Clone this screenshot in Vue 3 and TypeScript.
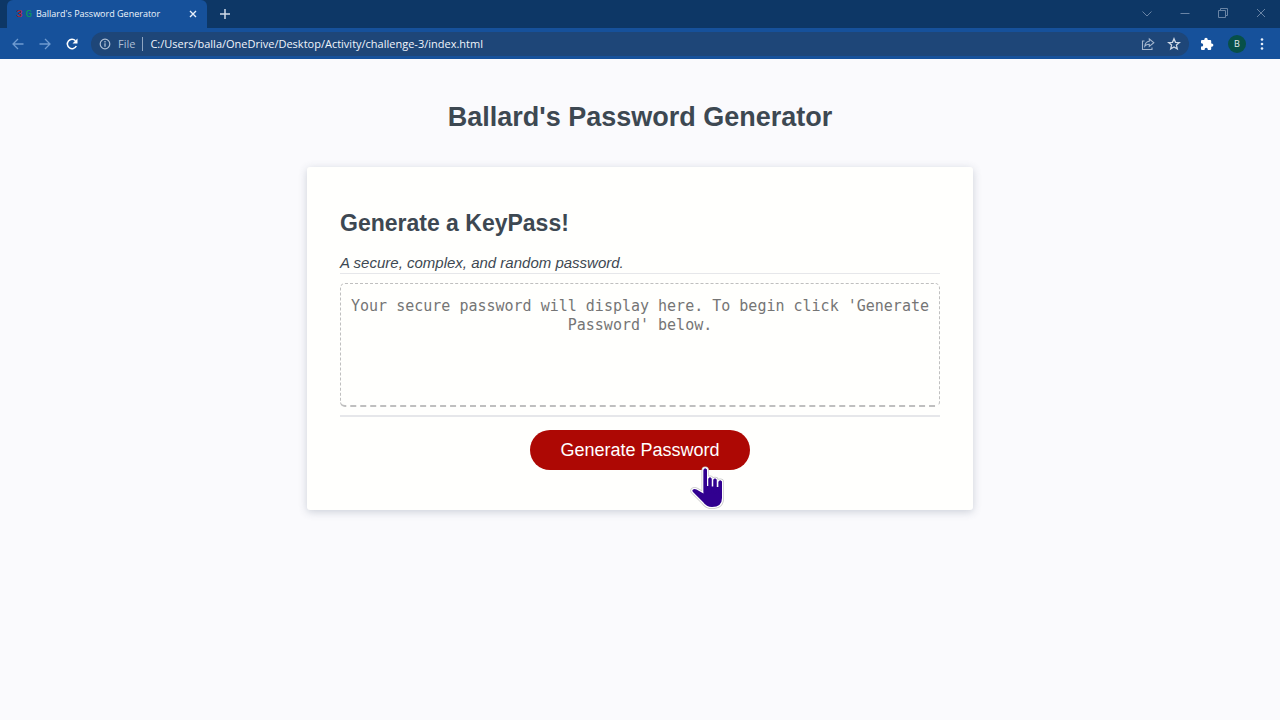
<script setup lang="ts">
import { ref } from 'vue'

const address = ref<string>('C:/Users/balla/OneDrive/Desktop/Activity/challenge-3/index.html')
const password = ref<string>('')

const sets: string[] = ['abcdefghijklmnopqrstuvwxyz', 'ABCDEFGHIJKLMNOPQRSTUVWXYZ', '0123456789', '!@#$%^&*()-_=+']

function generate(): void {
  const pool = sets.join('')
  const values = crypto.getRandomValues(new Uint32Array(16))
  password.value = Array.from(values, (v) => pool[v % pool.length]).join('')
}
</script>

<template>
  <div class="window">
    <header class="chrome">
      <div class="tabs">
        <div class="tab">
          <span class="favicon" aria-hidden="true"><span class="fav-red">3</span><span class="fav-green">G</span></span>
          <span class="tab-title">Ballard's Password Generator</span>
          <button class="icon tab-close" type="button" aria-label="Close tab">
            <svg width="8" height="8" viewBox="0 0 8 8"><path d="M1 1l6 6M7 1l-6 6" stroke="#e8f0fb" stroke-width="1.4" /></svg>
          </button>
        </div>
        <button class="icon new-tab" type="button" aria-label="New tab">
          <svg width="12" height="12" viewBox="0 0 12 12"><path d="M6 1v10M1 6h10" stroke="#cfdae8" stroke-width="1.5" /></svg>
        </button>
        <div class="controls">
          <button class="icon" type="button" aria-label="Search tabs">
            <svg width="12" height="12" viewBox="0 0 12 12"><path d="M1.500 3.500l4.500 4.500 4.500-4.500" /></svg>
          </button>
          <button class="icon" type="button" aria-label="Minimize">
            <svg width="12" height="12" viewBox="0 0 12 12"><path d="M1.500 5.500h9" /></svg>
          </button>
          <button class="icon" type="button" aria-label="Restore">
            <svg width="12" height="12" viewBox="0 0 12 12"><path d="M1.500 2.500h7v7h-7zM3.500 2.500v-2h7v7h-2" /></svg>
          </button>
          <button class="icon" type="button" aria-label="Close window">
            <svg width="12" height="12" viewBox="0 0 12 12"><path d="M2 1l8 8M10 1l-8 8" /></svg>
          </button>
        </div>
      </div>

      <div class="toolbar">
        <nav class="nav">
          <button class="icon" type="button" aria-label="Back">
            <svg width="14" height="12" viewBox="0 0 14 12" fill="none" stroke="#6f9bd1" stroke-width="1.3"><path d="M12.500 6H2M7 1L2 6l5 5" /></svg>
          </button>
          <button class="icon" type="button" aria-label="Forward">
            <svg width="14" height="12" viewBox="0 0 14 12" fill="none" stroke="#6f9bd1" stroke-width="1.3"><path d="M1.500 6h10.500M7 1l5 5-5 5" /></svg>
          </button>
          <button class="icon" type="button" aria-label="Reload">
            <svg width="14" height="14" viewBox="0 0 14 14"><path d="M11.300 9A4.700 4.700 0 1 1 10.500 3.800" fill="none" stroke="#fff" stroke-width="1.5" /><path d="M12.500 1.500v5h-5z" fill="#fff" /></svg>
          </button>
        </nav>
        <div class="omnibox">
          <svg width="12" height="12" viewBox="0 0 12 12"><circle cx="6" cy="6" r="4.8" fill="none" stroke="#aebfd5" stroke-width="1.2" /><path d="M6 5.200v3.600M6 3.100v1.300" stroke="#aebfd5" stroke-width="1.3" /></svg>
          <label class="scheme" for="address">File</label>
          <span class="divider"></span>
          <input id="address" v-model="address" class="address" type="text" spellcheck="false" />
          <button class="icon" type="button" aria-label="Share">
            <svg width="14" height="14" viewBox="0 0 14 14" fill="none" stroke="#a4b6ce" stroke-width="1.1"><path d="M3.500 4H1.500v8.500h9.500V10.500" /><path d="M8.300 2l4.500 3.700-4.500 3.700V7.200C6.300 7.100 5 7.700 3.800 9.200 4.100 6.200 5.700 4.500 8.300 4.200z" /></svg>
          </button>
          <button class="icon" type="button" aria-label="Bookmark">
            <svg width="14" height="14" viewBox="0 0 14 14" fill="none" stroke="#ccd7e5" stroke-width="1.3"><path d="M7 1.700l1.500 3.600 3.900.300-3 2.500.9 3.800L7 9.900l-3.300 2 .9-3.800-3-2.500 3.900-.300z" /></svg>
          </button>
        </div>
        <div class="actions">
          <button class="icon" type="button" aria-label="Extensions">
            <svg width="14" height="14" viewBox="0 0 14 14"><path d="M4.300 3V2.500a1.700 1.700 0 0 1 3.400 0V3h2.500q1 0 1 1v2.400h.5a1.700 1.700 0 0 1 0 3.400h-.5V12q0 1-1 1H7.800v-.600a1.600 1.600 0 0 0-3.200 0V13H2q-1 0-1-1V9.500h.6a1.600 1.600 0 0 0 0-3.200H1V4q0-1 1-1z" fill="#fff" /></svg>
          </button>
          <button class="avatar" type="button" aria-label="Profile B">B</button>
          <button class="icon" type="button" aria-label="Menu">
            <svg width="4" height="14" viewBox="0 0 4 14" fill="#e8f0fb"><circle cx="2" cy="2.500" r="1.3" /><circle cx="2" cy="7" r="1.3" /><circle cx="2" cy="11.500" r="1.3" /></svg>
          </button>
        </div>
      </div>
    </header>

    <main class="page">
      <h1>Ballard's Password Generator</h1>
      <section class="card">
        <h2>Generate a KeyPass!</h2>
        <label class="lead" for="password">A secure, complex, and random password.</label>
        <textarea
          id="password"
          v-model="password"
          readonly
          placeholder="Your secure password will display here. To begin click 'Generate Password' below."
        ></textarea>
        <div class="footer">
          <div class="action">
            <button class="generate" type="button" @click="generate">Generate Password</button>
            <svg class="pointer" width="36" height="44" viewBox="0 0 36 44" aria-hidden="true">
              <path
                d="M12.500 4.500Q12.500 2.500 14.200 2.500T16 4.500V20H17.500V13Q17.500 11.500 19 11.500T20.500 13V20.500H22.500V14Q22.500 12.700 24 12.700T25.500 14V21H27.500V16Q27.500 14.500 29.200 14.500T31 16V32Q31 41 21 41Q15.500 41 12 36L2 26Q.500 24.500 2 23.500T5.500 23.500L12.500 27.500Z"
                fill="#310090" stroke="#c9c9c9" stroke-width="4" stroke-linejoin="round"
              />
              <path
                d="M12.500 4.500Q12.500 2.500 14.200 2.500T16 4.500V20H17.500V13Q17.500 11.500 19 11.500T20.500 13V20.500H22.500V14Q22.500 12.700 24 12.700T25.500 14V21H27.500V16Q27.500 14.500 29.200 14.500T31 16V32Q31 41 21 41Q15.500 41 12 36L2 26Q.500 24.500 2 23.500T5.500 23.500L12.500 27.500Z"
                fill="#310090" stroke="#fff" stroke-width="2.5" stroke-linejoin="round" paint-order="stroke"
              />
              <path d="M14.200 4V26M19 13V26M24 14V26M29.200 16V26" stroke="#310090" stroke-width="3" stroke-linecap="round" />
            </svg>
          </div>
        </div>
      </section>
    </main>
  </div>
</template>

<style>
body {
  margin: 0;
  background: #fafafd;
}
</style>

<style scoped>
* {
  box-sizing: border-box;
}
.window {
  min-height: 100vh;
  font-family: 'Liberation Sans', Arial, sans-serif;
  color: #3d4852;
}
.chrome {
  font-family: 'Open Sans', 'Noto Sans', sans-serif;
  background: #0d3766;
}
svg {
  display: block;
  flex: none;
}
.icon {
  display: flex;
  align-items: center;
  justify-content: center;
  padding: 0;
  border: 0;
  background: none;
}
.tabs {
  display: flex;
  align-items: center;
  height: 28px;
  padding: 0 13px 0 7px;
}
.tab {
  display: flex;
  align-items: center;
  width: 200px;
  height: 28px;
  padding: 0 10px 0 9px;
  border-radius: 6px 6px 0 0;
  background: #16519b;
}
.favicon {
  display: flex;
  flex: none;
  justify-content: space-between;
  width: 16px;
  margin-right: 4px;
  font-family: 'Liberation Mono', monospace;
  font-size: 11px;
  line-height: 14px;
}
.fav-red {
  color: #c4161c;
}
.fav-green {
  color: #07a05a;
}
.tab-title {
  flex: 1;
  color: #f0f5fc;
  font-size: 9px;
  line-height: 14px;
  white-space: nowrap;
}
.new-tab {
  margin-left: 12px;
}
.controls {
  display: flex;
  gap: 26px;
  margin-left: auto;
  fill: none;
  stroke: #6984a5;
  stroke-width: 1;
}
.toolbar {
  display: flex;
  align-items: center;
  height: 31px;
  padding: 0 16px 0 11px;
  background: #16519b;
}
.nav {
  display: flex;
  align-items: center;
  gap: 13px;
  margin-right: 12px;
}
.omnibox {
  display: flex;
  flex: 1;
  align-items: center;
  height: 24px;
  padding: 0 8px;
  border-radius: 12px;
  background: #1e4678;
  font-size: 11px;
}
.omnibox .icon {
  margin-left: 12px;
}
.scheme {
  margin-left: 7px;
  color: #aebfd5;
}
.divider {
  width: 1px;
  height: 14px;
  margin: 0 7px;
  background: #8fa5c1;
}
.address {
  flex: 1;
  min-width: 0;
  padding: 0;
  border: 0;
  outline: 0;
  background: none;
  color: #f0f5fc;
  font: inherit;
}
.actions {
  display: flex;
  align-items: center;
  gap: 14px;
  margin-left: 11px;
}
.avatar {
  width: 18px;
  height: 18px;
  padding: 0;
  border: 0;
  border-radius: 50%;
  background: #075048;
  color: #e3eeee;
  font: 9px/18px 'Open Sans', sans-serif;
}
.page {
  padding: 40px 20px;
}
h1 {
  margin: 0;
  font-size: 27px;
  line-height: 36px;
  text-align: center;
}
.card {
  max-width: 666px;
  margin: 32px auto 0;
  padding: 40px 33px;
  border-radius: 3px;
  background: #fffffd;
  box-shadow: 0 2px 8px rgba(60, 75, 100, 0.24);
}
h2 {
  margin: 0 0 14px;
  font-size: 23px;
  line-height: 32px;
}
.lead {
  display: block;
  padding-bottom: 1px;
  border-bottom: 1px solid #e6e7ea;
  font-size: 15px;
  font-style: italic;
  line-height: 19px;
}
textarea {
  display: block;
  width: 100%;
  height: 124px;
  margin: 9px 0 8px;
  padding: 13px 8px;
  border: 1px dashed #bfbfbf;
  border-bottom-width: 2px;
  border-radius: 5px;
  outline: 0;
  background: none;
  color: #3d4852;
  font: 15px/19px Consolas, 'DejaVu Sans Mono', monospace;
  text-align: center;
  resize: none;
}
textarea::placeholder {
  color: #757575;
  opacity: 1;
}
.footer {
  display: flex;
  justify-content: center;
  padding-top: 13px;
  border-top: 2px solid #e6e7ea;
}
.action {
  position: relative;
}
.generate {
  display: block;
  height: 40px;
  padding: 0 30px;
  border: 0;
  border-radius: 20px;
  background: #ad0804;
  color: #fff;
  font: 18px/40px 'Liberation Sans', Arial, sans-serif;
}
.pointer {
  position: absolute;
  right: 23px;
  bottom: -40px;
  overflow: visible;
}
</style>
